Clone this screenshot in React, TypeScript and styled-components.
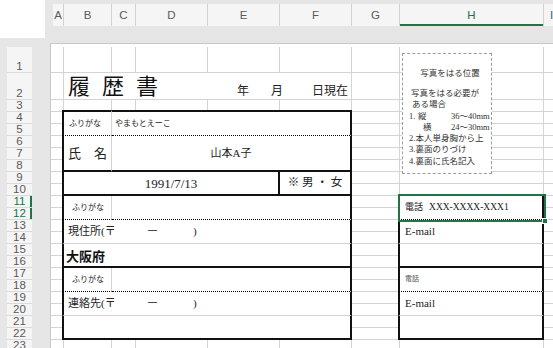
import React from 'react';
import styled, { createGlobalStyle } from 'styled-components';

const GRID = '#d4d4d4';
const GREEN = '#217346';
const HEAD_BG = '#f5f5f5';
const MINCHO = `"Liberation Serif", "Noto Sans CJK JP", serif`;
const GOTHIC = `"Noto Sans CJK JP", sans-serif`;
const UI = `"Liberation Sans", Arial, sans-serif`;

// column widths include the right grid line (A..I), J takes the rest
const COLS = [13, 48, 24, 72, 72, 72, 48, 144, 16];
const COL_NAMES = ['A', 'B', 'C', 'D', 'E', 'F', 'G', 'H', 'I'];
const HEAD_WIDTHS = [11, 48, 24, 72, 72, 72, 48, 144, 16];
const ROWS = [26, 27, 12, ...Array(20).fill(12)];
const ACTIVE_ROWS = [11, 12];

type Edge = 'thick' | 'dot' | 'grid' | 'none';

const edge = (e: Edge) =>
  e === 'thick'
    ? '2px solid #111'
    : e === 'dot'
      ? '1px dotted #000'
      : e === 'grid'
        ? `1px solid ${GRID}`
        : 'none';
const edgeWidth = (e: Edge) => (e === 'thick' ? 2 : e === 'none' ? 0 : 1);

const GlobalStyle = createGlobalStyle`
  * { box-sizing: border-box; }
  html, body { margin: 0; padding: 0; background: #e6e6e6; }
`;

const Window = styled.div`
  width: 553px;
  height: 348px;
  overflow: hidden;
  display: flex;
  flex-direction: column;
  background: #e6e6e6;
`;

const TopBar = styled.div`
  display: flex;
  height: 43px;
  flex-shrink: 0;
`;

const Corner = styled.div`
  width: 45px;
  height: 38px;
  background: #fff;
  flex-shrink: 0;
`;

const ColStrip = styled.div`
  display: flex;
  align-self: flex-start;
  height: 22px;
  margin: 4px 0 0 8px;
`;

const ColHead = styled.div<{ $w: number; $active?: boolean }>`
  width: ${(p) => p.$w}px;
  flex-shrink: 0;
  height: 22px;
  display: flex;
  align-items: center;
  justify-content: center;
  background: ${HEAD_BG};
  border-right: 1px solid #d2d2d2;
  font-family: ${UI};
  font-size: 11.5px;
  color: ${(p) => (p.$active ? GREEN : '#5a5a5a')};
  box-shadow: ${(p) => (p.$active ? `inset 0 -2px 0 ${GREEN}` : 'none')};
`;

const Body = styled.div`
  display: flex;
  flex: 1;
  min-height: 0;
`;

const RowCol = styled.div`
  display: flex;
  flex-direction: column;
  width: 25px;
  margin: 4px 0 0 7px;
  flex-shrink: 0;
`;

const RowHead = styled.div<{ $h: number; $active?: boolean }>`
  height: ${(p) => p.$h}px;
  flex-shrink: 0;
  display: flex;
  align-items: flex-end;
  justify-content: center;
  padding-bottom: 1px;
  background: ${HEAD_BG};
  border-bottom: 1px solid #dadada;
  font-family: ${UI};
  font-size: 11.5px;
  line-height: 10px;
  overflow: hidden;
  color: ${(p) => (p.$active ? GREEN : '#5a5a5a')};
  box-shadow: ${(p) => (p.$active ? `inset -2px 0 0 ${GREEN}` : 'none')};
`;

const Sheet = styled.div`
  flex: 1;
  margin-left: 18px;
  padding-top: 3px;
  background: #fff;
  border-top: 1px solid #c9c9c9;
  border-left: 1px solid #c9c9c9;
  display: grid;
  grid-template-columns: ${COLS.map((w) => `${w}px`).join(' ')} 1fr;
  grid-template-rows: ${ROWS.map((h) => `${h}px`).join(' ')};
  align-content: start;
  overflow: hidden;
`;

const GridCell = styled.div<{ $c: number; $r: number }>`
  grid-column: ${(p) => p.$c};
  grid-row: ${(p) => p.$r};
  border-right: 1px solid ${GRID};
  border-bottom: 1px solid ${GRID};
`;

interface CellProps {
  $area: string;
  $t?: Edge;
  $r?: Edge;
  $b?: Edge;
  $l?: Edge;
  $justify?: string;
  $pad?: number;
}

const Cell = styled.div<CellProps>`
  grid-area: ${(p) => p.$area};
  display: flex;
  align-items: center;
  justify-content: ${(p) => p.$justify ?? 'flex-start'};
  padding-left: ${(p) => p.$pad ?? 4}px;
  background: #fff;
  border-top: ${(p) => edge(p.$t ?? 'none')};
  border-left: ${(p) => edge(p.$l ?? 'none')};
  border-right: ${(p) => edge(p.$r ?? 'grid')};
  border-bottom: ${(p) => edge(p.$b ?? 'grid')};
  margin-top: ${(p) => -edgeWidth(p.$t ?? 'none')}px;
  margin-left: ${(p) => -edgeWidth(p.$l ?? 'none')}px;
  white-space: nowrap;
  overflow: hidden;
  min-width: 0;
  color: #222;
`;

const TitleCell = styled(Cell)`
  align-items: flex-end;
  justify-content: space-between;
  padding: 0 3px 1px 4px;
`;

const Title = styled.span`
  font-family: ${MINCHO};
  font-size: 22px;
  line-height: 1;
  letter-spacing: 12px;
  color: #111;
`;

const DateLine = styled.span`
  display: flex;
  align-items: flex-end;
  padding-bottom: 1px;
`;

const Text = styled.span<{ $size: number; $font?: string; $weight?: number; $color?: string; $w?: number; $ml?: number }>`
  display: inline-block;
  font-family: ${(p) => p.$font ?? MINCHO};
  font-size: ${(p) => p.$size}px;
  font-weight: ${(p) => p.$weight ?? 400};
  color: ${(p) => p.$color ?? '#222'};
  line-height: 1;
  width: ${(p) => (p.$w ? `${p.$w}px` : 'auto')};
  margin-left: ${(p) => p.$ml ?? 0}px;
`;

const PhotoBox = styled.div`
  grid-area: 1 / 8 / 12 / 9;
  align-self: start;
  justify-self: start;
  margin: 6px 0 0 2px;
  width: 90px;
  height: 121px;
  padding: 14px 0 0 6px;
  background: #fff;
  border: 1px dashed #9c9c9c;
  font-family: ${MINCHO};
  font-size: 8.5px;
  line-height: 11px;
  color: #333;
  white-space: nowrap;
`;

const PhotoTitle = styled.div`
  text-align: center;
  margin-bottom: 9px;
`;

const PhotoLine = styled.div<{ $indent?: number }>`
  display: flex;
  height: 11.3px;
  padding-left: ${(p) => p.$indent ?? 0}px;
`;

const Num = styled.span`
  width: 9px;
`;

const Dim = styled.span<{ $shift?: number }>`
  width: 33px;
  padding-left: ${(p) => p.$shift ?? 0}px;
`;

const Selection = styled.div`
  grid-area: 11 / 8 / 13 / 9;
  margin: -2px -2px -2px -2px;
  border: 2px solid ${GREEN};
  position: relative;
  pointer-events: none;
`;

const FillHandle = styled.div`
  position: absolute;
  right: -4px;
  bottom: -4px;
  width: 6px;
  height: 6px;
  background: ${GREEN};
  border: 1px solid #fff;
`;

const Postal = ({ label }: { label: string }) => (
  <>
    <Text $size={11} $w={79}>{label}(〒</Text>
    <Text $size={11} $w={46} $color="#444">ー</Text>
    <Text $size={11}>)</Text>
  </>
);

export default function App() {
  return (
    <Window>
      <GlobalStyle />
      <TopBar>
        <Corner />
        <ColStrip>
          {COL_NAMES.map((n, i) => (
            <ColHead key={n} $w={HEAD_WIDTHS[i]} $active={n === 'H'}>
              {n}
            </ColHead>
          ))}
        </ColStrip>
      </TopBar>

      <Body>
        <RowCol>
          {ROWS.map((h, i) => (
            <RowHead key={i} $h={h} $active={ACTIVE_ROWS.includes(i + 1)}>
              {i + 1}
            </RowHead>
          ))}
        </RowCol>

        <Sheet>
          {ROWS.map((_, r) =>
            [...COL_NAMES, 'J'].map((_, c) => <GridCell key={`${r}-${c}`} $c={c + 1} $r={r + 1} />),
          )}

          <TitleCell $area="2 / 2 / 3 / 7">
            <Title>履歴書</Title>
            <DateLine>
              <Text $size={12} $w={34}>年</Text>
              <Text $size={12} $w={41}>月</Text>
              <Text $size={12}>日現在</Text>
            </DateLine>
          </TitleCell>

          {/* 氏名欄 */}
          <Cell $area="4 / 2 / 6 / 3" $t="thick" $l="thick" $b="dot" $pad={5}>
            <Text $size={8}>ふりがな</Text>
          </Cell>
          <Cell $area="4 / 3 / 6 / 7" $t="thick" $r="thick" $b="dot" $pad={3}>
            <Text $size={8}>やまもとえーこ</Text>
          </Cell>
          <Cell $area="6 / 2 / 9 / 3" $l="thick" $b="thick">
            <Text $size={13}>氏　名</Text>
          </Cell>
          <Cell $area="6 / 3 / 9 / 7" $r="thick" $b="thick" $justify="center" $pad={0}>
            <Text $size={11}>山本A子</Text>
          </Cell>
          <Cell $area="9 / 2 / 11 / 6" $l="thick" $r="thick" $b="thick" $justify="center" $pad={0}>
            <Text $size={13}>1991/7/13</Text>
          </Cell>
          <Cell $area="9 / 6 / 11 / 7" $r="thick" $b="thick" $justify="center" $pad={0}>
            <Text $size={11.5}>※ 男 ・ 女</Text>
          </Cell>

          {/* 現住所 */}
          <Cell $area="11 / 2 / 13 / 3" $l="thick" $b="dot" $pad={8}>
            <Text $size={8}>ふりがな</Text>
          </Cell>
          <Cell $area="11 / 3 / 13 / 7" $r="thick" $b="dot" />
          <Cell $area="13 / 2 / 15 / 7" $l="thick" $r="thick">
            <Postal label="現住所" />
          </Cell>
          <Cell $area="15 / 2 / 17 / 7" $l="thick" $r="thick" $b="thick" $pad={2}>
            <Text $size={13} $font={GOTHIC} $weight={700} $color="#111">大阪府</Text>
          </Cell>

          {/* 連絡先 */}
          <Cell $area="17 / 2 / 19 / 3" $l="thick" $b="dot" $pad={8}>
            <Text $size={8}>ふりがな</Text>
          </Cell>
          <Cell $area="17 / 3 / 19 / 7" $r="thick" $b="dot" />
          <Cell $area="19 / 2 / 21 / 7" $l="thick" $r="thick">
            <Postal label="連絡先" />
          </Cell>
          <Cell $area="21 / 2 / 23 / 7" $l="thick" $r="thick" $b="thick" />

          {/* 電話・E-mail */}
          <Cell $area="11 / 8 / 13 / 9" $t="thick" $l="thick" $r="thick" $b="dot" $pad={5}>
            <Text $size={9}>電話</Text>
            <Text $size={9.5} $ml={6}>XXX-XXXX-XXX1</Text>
          </Cell>
          <Cell $area="13 / 8 / 15 / 9" $l="thick" $r="thick" $pad={5}>
            <Text $size={11}>E-mail</Text>
          </Cell>
          <Cell $area="15 / 8 / 17 / 9" $l="thick" $r="thick" $b="thick" />
          <Cell $area="17 / 8 / 19 / 9" $l="thick" $r="thick" $b="dot" $pad={5}>
            <Text $size={7} $color="#555">電話</Text>
          </Cell>
          <Cell $area="19 / 8 / 21 / 9" $l="thick" $r="thick" $pad={5}>
            <Text $size={11}>E-mail</Text>
          </Cell>
          <Cell $area="21 / 8 / 23 / 9" $l="thick" $r="thick" $b="thick" />

          <PhotoBox>
            <PhotoTitle>写真をはる位置</PhotoTitle>
            <PhotoLine $indent={2}>写真をはる必要が</PhotoLine>
            <PhotoLine $indent={3}>ある場合</PhotoLine>
            <PhotoLine>
              <Num>1.</Num>
              <Dim>縦</Dim>
              <span>36～40mm</span>
            </PhotoLine>
            <PhotoLine>
              <Num />
              <Dim $shift={5}>横</Dim>
              <span>24～30mm</span>
            </PhotoLine>
            <PhotoLine>2.本人単身胸から上</PhotoLine>
            <PhotoLine>3.裏面のりづけ</PhotoLine>
            <PhotoLine>4.裏面に氏名記入</PhotoLine>
          </PhotoBox>

          <Selection>
            <FillHandle />
          </Selection>
        </Sheet>
      </Body>
    </Window>
  );
}
